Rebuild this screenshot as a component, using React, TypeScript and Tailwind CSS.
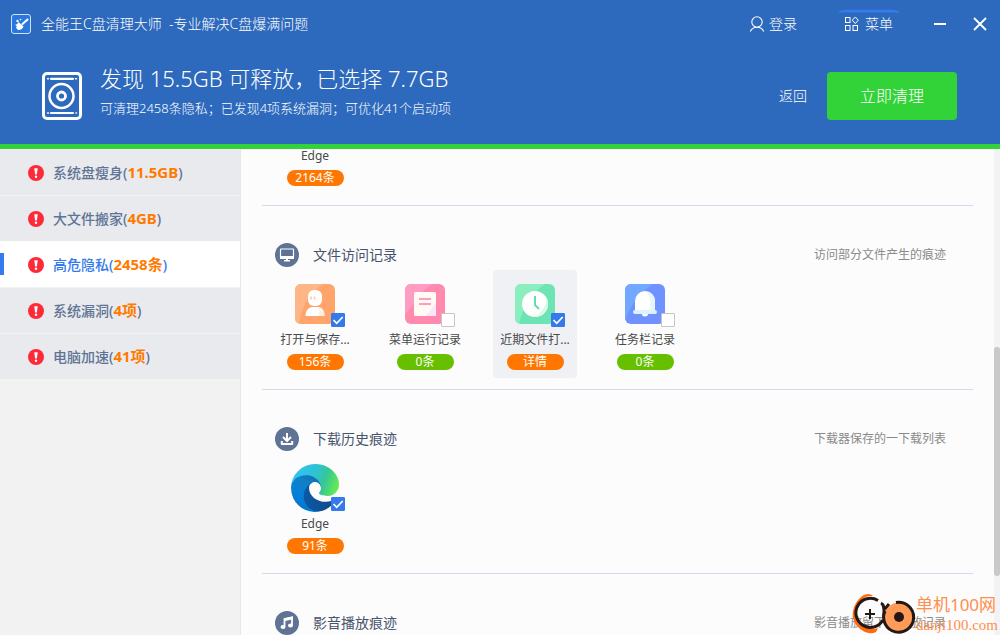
import { useId, useState } from 'react'
import type { ReactNode } from 'react'
import clsx from 'clsx'

interface Category {
  id: string
  label: string
  count: string
}

interface TraceItem {
  id: string
  name: string
  icon: ReactNode
  badge: string
  tone: 'orange' | 'green'
  checked: boolean
  hovered?: boolean
}

interface TraceSection {
  id: string
  title?: string
  hint?: string
  icon?: ReactNode
  items: TraceItem[]
}

const CATEGORIES: Category[] = [
  { id: 'slim', label: '系统盘瘦身', count: '11.5GB' },
  { id: 'move', label: '大文件搬家', count: '4GB' },
  { id: 'privacy', label: '高危隐私', count: '2458条' },
  { id: 'leak', label: '系统漏洞', count: '4项' },
  { id: 'boost', label: '电脑加速', count: '41项' },
]

function EdgeIcon() {
  const id = useId()
  return (
    <svg viewBox="0 0 256 256" className="size-12" aria-hidden="true">
      <defs>
        <linearGradient id={`${id}a`} x1="60" y1="177" x2="240" y2="177" gradientUnits="userSpaceOnUse">
          <stop offset="0" stopColor="#0c59a4" />
          <stop offset="1" stopColor="#114a8b" />
        </linearGradient>
        <linearGradient id={`${id}b`} x1="150" y1="90" x2="45" y2="225" gradientUnits="userSpaceOnUse">
          <stop offset="0" stopColor="#0f6fb8" />
          <stop offset="0.3" stopColor="#1180c8" />
          <stop offset="0.7" stopColor="#0680d7" />
          <stop offset="1" stopColor="#0078d4" />
        </linearGradient>
        <linearGradient id={`${id}c`} x1="10" y1="50" x2="245" y2="130" gradientUnits="userSpaceOnUse">
          <stop offset="0" stopColor="#35c1f1" />
          <stop offset="0.45" stopColor="#2dc2d4" />
          <stop offset="0.7" stopColor="#36c795" />
          <stop offset="1" stopColor="#66eb52" />
        </linearGradient>
      </defs>
      <path
        fill={`url(#${id}a)`}
        d="M231 190.500c-3.400 1.800-6.900 3.400-10.500 4.700a101.700 101.700 0 0 1-35.900 6.500c-47.300 0-88.500-32.500-88.500-74.300a31.500 31.500 0 0 1 16.400-27.300c-42.800 1.800-53.800 46.400-53.800 72.500 0 73.900 68.100 81.400 82.800 81.400 7.900 0 19.800-2.300 27-4.600l1.300-.4a128.300 128.300 0 0 0 66.600-52.800 4 4 0 0 0-5.400-5.700z"
      />
      <path
        fill={`url(#${id}b)`}
        d="M105.700 241.400a79.200 79.200 0 0 1-22.700-21.300 80.700 80.700 0 0 1 29.500-120c3.200-1.500 8.500-4.100 15.600-4a32.400 32.400 0 0 1 25.700 13 31.900 31.900 0 0 1 6.300 18.700c0-.2 24.500-79.600-80-79.600-43.900 0-80 41.600-80 78.200a130.200 130.200 0 0 0 12.100 56 128 128 0 0 0 156.400 67.100 75.500 75.500 0 0 1-62.800-8z"
      />
      <path
        fill={`url(#${id}c)`}
        d="M152.300 148.900c-.8 1-3.300 2.500-3.300 5.700 0 2.600 1.700 5.100 4.700 7.200 14.400 10 41.500 8.700 41.600 8.700a59.600 59.600 0 0 0 30.300-8.300 61.400 61.400 0 0 0 30.400-52.900c.3-22.400-8-37.300-11.300-43.900C223.500 23.900 177.700 0 128 0A128 128 0 0 0 0 126.200c.5-36.500 36.800-66 80-66 3.500 0 23.500.3 42 10.100a72.600 72.600 0 0 1 30.900 29.300c6.100 10.600 7.200 24.100 7.200 29.500s-2.700 13.300-7.800 19.800z"
      />
    </svg>
  )
}

function PersonIcon() {
  return (
    <svg viewBox="0 0 40 40" className="size-10" aria-hidden="true">
      <rect width="40" height="40" rx="6" fill="#ffa56b" />
      <path d="M6 0h22C16 8 6 22 4 39.700A6 6 0 0 1 0 34V6a6 6 0 0 1 6-6z" fill="#ffb686" />
      <rect x="13" y="6" width="14" height="16" rx="6" fill="#fff" />
      <path d="M16 12.500v3M19.500 12.500v3" stroke="#ffc9a3" strokeWidth="1.500" />
      <path d="M10.500 32c0-5.500 3-9 7-9h5c4 0 7 3.500 7 9z" fill="#fff" />
      <path d="M24 32c0-5 0-7-1-9 4 .2 6.500 3.500 6.500 9z" fill="#fff0e4" />
    </svg>
  )
}

function NoteIcon() {
  return (
    <svg viewBox="0 0 40 40" className="size-10" aria-hidden="true">
      <rect width="40" height="40" rx="6" fill="#ff8aae" />
      <path d="M6 0h22C12 8 10 22 0 30V6a6 6 0 0 1 6-6z" fill="#ff9cc4" />
      <rect x="9" y="8" width="22" height="24" rx="1.500" fill="#fffaf3" />
      <path d="M31 20v10.500a1.500 1.500 0 0 1-1.500 1.500H20c5-3 7-11 11-12z" fill="#fbe6fa" />
      <path d="M14 15h12M14 20h12" stroke="#ff9dc0" strokeWidth="2" />
    </svg>
  )
}

function ClockIcon() {
  return (
    <svg viewBox="0 0 40 40" className="size-10" aria-hidden="true">
      <rect width="40" height="40" rx="6" fill="#6ee4b4" />
      <path d="M6 0h24C18 8 8 22 4 39.700A6 6 0 0 1 0 34V6a6 6 0 0 1 6-6z" fill="#8beebf" />
      <circle cx="20" cy="20" r="13" fill="#fff" />
      <path d="M32 15a13 13 0 0 1-14 17.800C26 31 30 23 32 15z" fill="#d9fbea" />
      <path d="M20 12v9l4 4" fill="none" stroke="#67dbab" strokeWidth="2" />
    </svg>
  )
}

function BellIcon() {
  return (
    <svg viewBox="0 0 40 40" className="size-10" aria-hidden="true">
      <rect width="40" height="40" rx="6" fill="#6f92ff" />
      <path d="M6 0h22C16 8 6 20 0 36V6a6 6 0 0 1 6-6z" fill="#72a8ff" />
      <path d="M10 27V17a10 10 0 0 1 20 0v10z" fill="#fff" />
      <path d="M25 27c1-8 0-14-3-19.800A10 10 0 0 1 30 17v10z" fill="#e6f5ff" />
      <rect x="8" y="26" width="24" height="4" rx="2" fill="#def1ff" />
      <path d="M17 30h6a3 2.500 0 0 1-6 0z" fill="#fff" />
    </svg>
  )
}

function MonitorGlyph() {
  return (
    <svg viewBox="0 0 24 24" className="size-6" aria-hidden="true">
      <circle cx="12" cy="12" r="12" fill="#5f7394" />
      <rect x="5.500" y="6" width="13" height="9" rx="0.500" fill="none" stroke="#fff" strokeWidth="1.200" />
      <path d="M5 13h14v3H5z" fill="#fff" />
      <path d="M11 15h2v2h2v1.500H9V17h2z" fill="#fff" />
    </svg>
  )
}

function DownloadGlyph() {
  return (
    <svg viewBox="0 0 24 24" className="size-6" aria-hidden="true">
      <circle cx="12" cy="12" r="12" fill="#5f7394" />
      <path d="M12 6v7M8 10l4 4 4-4M6.800 14v3h10.400v-3" fill="none" stroke="#fff" strokeWidth="2" strokeLinejoin="round" />
    </svg>
  )
}

function MusicGlyph() {
  return (
    <svg viewBox="0 0 24 24" className="size-6" aria-hidden="true">
      <circle cx="12" cy="12" r="12" fill="#5f7394" />
      <path d="M9.500 15.500V8l7.500-1.700v8" fill="none" stroke="#fff" strokeWidth="1.800" />
      <path d="M9 7.500l8.800-2v2.800L9 10.300z" fill="#fff" />
      <ellipse cx="8" cy="16" rx="2.500" ry="2" fill="#fff" />
      <ellipse cx="15.500" cy="14.500" rx="2.500" ry="2" fill="#fff" />
    </svg>
  )
}

const SECTIONS: TraceSection[] = [
  {
    id: 'web',
    items: [{ id: 'web-edge', name: 'Edge', icon: <EdgeIcon />, badge: '2164条', tone: 'orange', checked: true }],
  },
  {
    id: 'files',
    title: '文件访问记录',
    hint: '访问部分文件产生的痕迹',
    icon: <MonitorGlyph />,
    items: [
      { id: 'open-save', name: '打开与保存...', icon: <PersonIcon />, badge: '156条', tone: 'orange', checked: true },
      { id: 'menu-run', name: '菜单运行记录', icon: <NoteIcon />, badge: '0条', tone: 'green', checked: false },
      { id: 'recent', name: '近期文件打...', icon: <ClockIcon />, badge: '详情', tone: 'orange', checked: true, hovered: true },
      { id: 'taskbar', name: '任务栏记录', icon: <BellIcon />, badge: '0条', tone: 'green', checked: false },
    ],
  },
  {
    id: 'downloads',
    title: '下载历史痕迹',
    hint: '下载器保存的一下载列表',
    icon: <DownloadGlyph />,
    items: [{ id: 'dl-edge', name: 'Edge', icon: <EdgeIcon />, badge: '91条', tone: 'orange', checked: true }],
  },
  {
    id: 'media',
    title: '影音播放痕迹',
    hint: '影音播放留下的播放记录',
    icon: <MusicGlyph />,
    items: [],
  },
]

function TitleBar() {
  return (
    <div className="flex h-12 items-center pl-[11px] pr-3">
      <svg viewBox="0 0 20 20" className="size-5" aria-hidden="true">
        <rect x="0.500" y="0.500" width="19" height="19" rx="2.500" fill="#2a78dd" stroke="#cfe0fa" />
        <path d="M16.500 5.500L11.500 10" stroke="#fff" strokeWidth="2" strokeLinecap="round" />
        <path d="M7.500 8l5 4.500c-.5 2-2.500 3.800-5.500 3.600L4.800 13.500l1.200-.8-1.800-2c1.500 0 2.600-1 3.300-2.700z" fill="#fff" />
        <circle cx="6.500" cy="7" r="1.200" fill="#fff" />
        <circle cx="9.500" cy="5.500" r="0.800" fill="#fff" />
      </svg>
      <h1 className="ml-2.5 whitespace-pre text-sm font-light">全能王C盘清理大师  -专业解决C盘爆满问题</h1>

      <button className="ml-auto flex items-center gap-1 text-sm font-light">
        <svg viewBox="0 0 16 16" className="size-4" fill="none" stroke="currentColor" strokeWidth="1.100" aria-hidden="true">
          <circle cx="8" cy="6" r="5.200" />
          <path d="M1.300 15.500c1.300-3 3.600-4.200 6.700-4.200s5.400 1.200 6.700 4.200" />
        </svg>
        登录
      </button>

      <button className="relative ml-10 flex h-7 items-center gap-1.5 px-2 text-sm font-light">
        <svg viewBox="0 0 62 4" className="absolute -top-px left-0 h-1 w-full" preserveAspectRatio="none" aria-hidden="true">
          <path d="M0 3.500Q4 .8 9 .8H53Q58 .8 62 3.500z" fill="#347cf0" />
        </svg>
        <svg viewBox="0 0 14 14" className="size-3.5" fill="none" stroke="currentColor" aria-hidden="true">
          <rect x="0.500" y="0.500" width="4.500" height="5" />
          <rect x="0.500" y="8.500" width="4.500" height="5" />
          <rect x="8" y="8.500" width="4.500" height="5" />
          <path d="M10.300 0l3 3.200-3 3.300-3-3.300z" />
        </svg>
        菜单
      </button>

      <button className="ml-[31px] flex size-4 items-center justify-center" aria-label="最小化">
        <span className="h-0.5 w-3 bg-white" />
      </button>
      <button className="ml-6 flex size-4 items-center justify-center" aria-label="关闭">
        <svg viewBox="0 0 14 14" className="size-3.5" stroke="currentColor" strokeWidth="1.800" aria-hidden="true">
          <path d="M1 1l12 12M13 1L1 13" />
        </svg>
      </button>
    </div>
  )
}

function Summary() {
  return (
    <div className="flex h-24 items-center pl-[42px] pr-[43px]">
      <svg viewBox="0 0 40 48" className="h-12 w-10 shrink-0" fill="none" stroke="#fff" aria-hidden="true">
        <rect x="1.500" y="1.500" width="37" height="45" rx="3.500" strokeWidth="3" />
        <circle cx="19.500" cy="24" r="12" strokeWidth="2.500" />
        <circle cx="19.500" cy="24" r="4" strokeWidth="2.800" />
        <path d="M9 6.800h22M9 41h22" strokeWidth="2.200" strokeLinecap="round" />
        <path d="M5.500 6.800h1M33.500 6.800h1M5.500 41h1M34 41h.5" strokeWidth="1.500" strokeLinecap="round" />
      </svg>
      <div className="ml-[18px] flex flex-col pb-2">
        <h2 className="text-[22px] font-light leading-8">发现 15.5GB 可释放，已选择 7.7GB</h2>
        <p className="text-[13px] font-light leading-7">可清理2458条隐私；已发现4项系统漏洞；可优化41个启动项</p>
      </div>
      <button className="ml-auto text-sm font-light">返回</button>
      <button className="ml-5 h-12 w-[130px] rounded bg-[#32d338] text-base font-light">立即清理</button>
    </div>
  )
}

function Sidebar({ active, onSelect }: { active: string; onSelect: (id: string) => void }) {
  return (
    <nav className="w-[241px] shrink-0 border-r border-[#e6e8ec] bg-[#f2f2f3]">
      {CATEGORIES.map((category) => {
        const isActive = category.id === active
        return (
          <button
            key={category.id}
            onClick={() => onSelect(category.id)}
            className={clsx(
              'relative flex h-[46px] w-full items-center gap-[9px] border-t pl-7 text-left text-sm font-medium',
              isActive ? 'border-white bg-white text-[#347aec]' : 'border-[#f2f2f3] bg-[#e8eaee] text-[#5f7394]',
            )}
          >
            {isActive && <span className="absolute left-0 top-[11px] h-[22px] w-1 bg-[#347aec]" />}
            <svg viewBox="0 0 16 16" className="size-4" aria-hidden="true">
              <circle cx="8" cy="8" r="8" fill="#fd2b38" />
              <path d="M6.300 3.200h3.400L8.900 9.500H7.100z" fill="#fff" />
              <circle cx="8" cy="11.800" r="1.200" fill="#fff" />
            </svg>
            <span>
              {category.label}(<span className="text-[15px] font-bold text-[#ff7a00]">{category.count}</span>)
            </span>
          </button>
        )
      })}
    </nav>
  )
}

function TraceTile({ item, checked, onToggle }: { item: TraceItem; checked: boolean; onToggle: () => void }) {
  const badgeClass = clsx(
    'mt-1 flex h-4 w-[57px] items-center justify-center rounded-full text-xs text-white',
    item.tone === 'orange' ? 'bg-[#ff7700]' : 'bg-[#66c000]',
  )

  return (
    <li className={clsx('flex w-[84px] flex-col items-center rounded-sm pb-2 pt-2.5', item.hovered && 'bg-[#f0f1f5]')}>
      <div className="relative flex size-12 items-center justify-center">
        {item.icon}
        <span className="absolute -right-1.5 bottom-px size-3.5">
          <input
            id={item.id}
            type="checkbox"
            checked={checked}
            onChange={onToggle}
            className="peer block size-3.5 appearance-none rounded-[1px] border border-[#c6c6c6] bg-white checked:border-[#347aec] checked:bg-[#347aec]"
          />
          <svg
            viewBox="0 0 14 14"
            className="pointer-events-none absolute inset-0 hidden size-3.5 peer-checked:block"
            aria-hidden="true"
          >
            <path d="M2.500 7l3.200 3.300 6-6.300" fill="none" stroke="#fff" strokeWidth="1.700" />
          </svg>
        </span>
      </div>
      <label htmlFor={item.id} className="mt-0.5 whitespace-nowrap text-xs leading-5 text-[#4a4a4a]">
        {item.name}
      </label>
      {item.hovered ? (
        <button className={badgeClass}>{item.badge}</button>
      ) : (
        <span className={badgeClass}>{item.badge}</span>
      )}
    </li>
  )
}

function Watermark() {
  return (
    <div className="pointer-events-none absolute bottom-0 right-0.5 flex items-end text-[#ff8f4d]">
      <svg viewBox="0 0 64 44" className="h-11 w-16" fill="none" aria-hidden="true">
        <path d="M21 5C17 1 11 3 6 9-1 18-1 29 6 36c5 5 12 8 18 5l2-4C18 39 11 36 7 30 3 22 5 12 12 7c3-2 6-2 9-2z" fill="#ff6a0d" />
        <path d="M26 9.500A14.500 14.500 0 1 0 31 29" stroke="#231815" strokeWidth="3" />
        <path d="M18 18v10M13 23h10" stroke="#231815" strokeWidth="2" />
        <path d="M29 12c4 2 3 8 3 14M33 18l4-5" stroke="#231815" strokeWidth="3" />
        <circle cx="47" cy="26" r="14.500" fill="#ff9a57" />
        <path d="M44 11.500A15 15 0 1 1 33 20" stroke="#231815" strokeWidth="3" />
        <circle cx="47" cy="26" r="5" fill="#231815" />
      </svg>
      <div className="flex flex-col">
        <span className="text-[17px] leading-5">单机100网</span>
        <span className="font-['Liberation_Serif',serif] text-[15px] leading-5">danji100.com</span>
      </div>
    </div>
  )
}

export default function App() {
  const [active, setActive] = useState('privacy')
  const [selected, setSelected] = useState<string[]>(
    SECTIONS.flatMap((section) => section.items.filter((item) => item.checked).map((item) => item.id)),
  )

  const toggle = (id: string) => {
    setSelected(selected.includes(id) ? selected.filter((other) => other !== id) : [...selected, id])
  }

  return (
    <div className="relative flex h-screen flex-col overflow-hidden bg-[#fcfcfc] font-['Noto_Sans','Noto_Sans_CJK_SC',sans-serif]">
      <header className="shrink-0 border-b-[5px] border-[#32d338] bg-[#2d69bc] text-white">
        <TitleBar />
        <Summary />
      </header>

      <div className="flex min-h-0 flex-1">
        <Sidebar active={active} onSelect={setActive} />

        <main className="min-w-0 flex-1 overflow-hidden px-[21px]">
          {/* list is scrolled part of the way down */}
          <div className="-mt-[63px]">
            {SECTIONS.map((section) => (
              <section key={section.id} className="border-b border-[#d3dcee] pb-[11px]">
                {section.title && (
                  <div className="flex items-center pb-[3px] pl-[13px] pr-[27px] pt-[37px]">
                    {section.icon}
                    <h3 className="ml-3.5 text-sm leading-6 text-[#46546c]">{section.title}</h3>
                    <p className="ml-auto text-xs leading-6 text-[#8a8a8a]">{section.hint}</p>
                  </div>
                )}
                <ul className="flex gap-[26px] pl-[11px]">
                  {section.items.map((item) => (
                    <TraceTile
                      key={item.id}
                      item={item}
                      checked={selected.includes(item.id)}
                      onToggle={() => toggle(item.id)}
                    />
                  ))}
                </ul>
              </section>
            ))}
          </div>
        </main>

        <div className="flex w-1.5 shrink-0 flex-col bg-[#f3f3f3] pt-[198px]">
          <div className="h-[229px] rounded-full bg-[#c9c9c9]" />
        </div>
      </div>

      <Watermark />
    </div>
  )
}
